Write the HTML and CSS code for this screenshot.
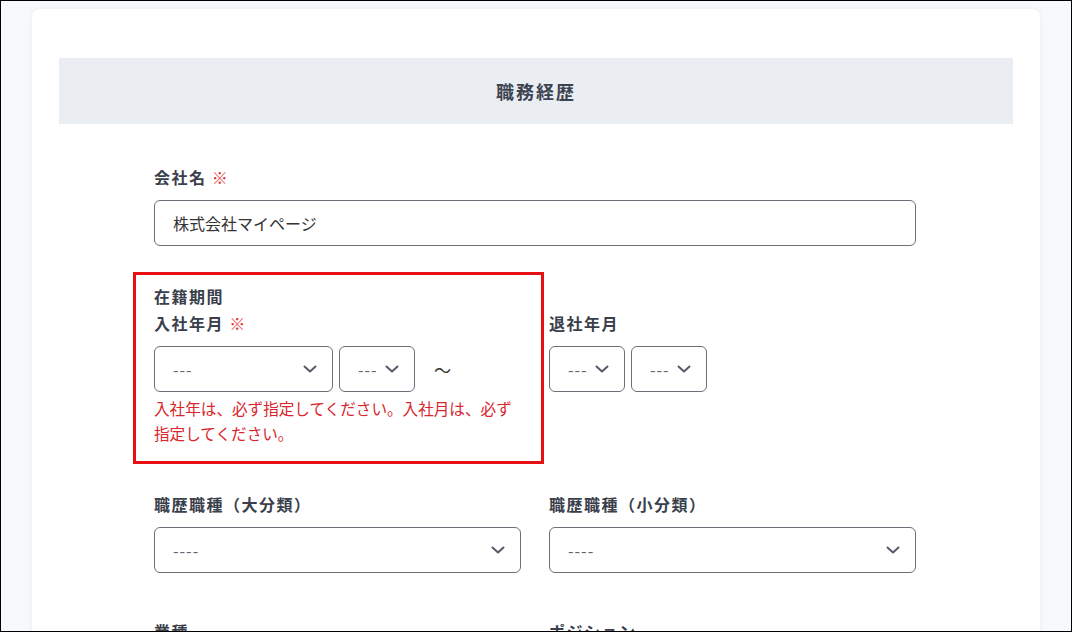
FILE: index.html
```html
<!DOCTYPE html>
<html lang="ja">
<head>
    <meta charset="UTF-8">
    <meta name="viewport" content="width=device-width, initial-scale=1.0">
    <title>職務経歴</title>
    <link rel="stylesheet" href="styles.css">
</head>
<body>
    <div class="frame">
        <div class="card">
            <h2 class="section-title">職務経歴</h2>

            <div class="form">
                <div class="field">
                    <label class="label">会社名 <span class="required">※</span></label>
                    <div class="input">株式会社マイページ</div>
                </div>

                <div class="period">
                    <div class="highlight"></div>
                    <div class="label">在籍期間</div>
                    <div class="row">
                        <div class="col">
                            <label class="label">入社年月 <span class="required">※</span></label>
                            <div class="select-group">
                                <div class="select select-year"><span>---</span><svg width="14" height="8" viewBox="0 0 14 8"><path d="M1.5 1.5 7 6.5l5.5-5" fill="none" stroke="#555b66" stroke-width="2" stroke-linecap="round" stroke-linejoin="round"/></svg></div>
                                <div class="select select-month"><span>---</span><svg width="14" height="8" viewBox="0 0 14 8"><path d="M1.5 1.5 7 6.5l5.5-5" fill="none" stroke="#555b66" stroke-width="2" stroke-linecap="round" stroke-linejoin="round"/></svg></div>
                                <span class="tilde">〜</span>
                            </div>
                            <p class="error">入社年は、必ず指定してください。入社月は、必ず指定してください。</p>
                        </div>
                        <div class="col">
                            <label class="label">退社年月</label>
                            <div class="select-group">
                                <div class="select select-month"><span>---</span><svg width="14" height="8" viewBox="0 0 14 8"><path d="M1.5 1.5 7 6.5l5.5-5" fill="none" stroke="#555b66" stroke-width="2" stroke-linecap="round" stroke-linejoin="round"/></svg></div>
                                <div class="select select-month"><span>---</span><svg width="14" height="8" viewBox="0 0 14 8"><path d="M1.5 1.5 7 6.5l5.5-5" fill="none" stroke="#555b66" stroke-width="2" stroke-linecap="round" stroke-linejoin="round"/></svg></div>
                            </div>
                        </div>
                    </div>
                </div>

                <div class="row field-row">
                    <div class="col">
                        <label class="label">職歴職種（大分類）</label>
                        <div class="select select-wide"><span>----</span><svg width="14" height="8" viewBox="0 0 14 8"><path d="M1.5 1.5 7 6.5l5.5-5" fill="none" stroke="#555b66" stroke-width="2" stroke-linecap="round" stroke-linejoin="round"/></svg></div>
                    </div>
                    <div class="col">
                        <label class="label">職歴職種（小分類）</label>
                        <div class="select select-wide"><span>----</span><svg width="14" height="8" viewBox="0 0 14 8"><path d="M1.5 1.5 7 6.5l5.5-5" fill="none" stroke="#555b66" stroke-width="2" stroke-linecap="round" stroke-linejoin="round"/></svg></div>
                    </div>
                </div>

                <div class="row field-row">
                    <div class="col">
                        <label class="label">業種</label>
                    </div>
                    <div class="col">
                        <label class="label">ポジション</label>
                    </div>
                </div>
            </div>
        </div>
    </div>
</body>
</html>
```

FILE: styles.css
```css
body {
    margin: 0;
    font-family: "Noto Sans CJK JP", "Noto Sans", sans-serif;
    color: #3a404b;
}
.frame {
    width: 1072px;
    height: 632px;
    box-sizing: border-box;
    border: 1px solid #000;
    background: #f8f9fb;
    padding: 8px 31px 0 31px;
    overflow: hidden;
}
.card {
    background: #fff;
    border-radius: 8px;
    box-shadow: 0 0 6px rgba(0, 0, 0, 0.06);
    padding: 49px 27px 60px;
    min-height: 700px;
}
.section-title {
    margin: 0;
    height: 66px;
    background: #eaedf2;
    display: flex;
    align-items: center;
    justify-content: center;
    font-size: 18px;
    font-weight: 700;
    letter-spacing: 2px;
    color: #3d4451;
}
.form {
    width: 762px;
    margin-left: 95px;
    padding-top: 41px;
}
.label {
    display: block;
    font-size: 16px;
    font-weight: 700;
    line-height: 24px;
    letter-spacing: 1.5px;
    color: #3a404b;
}
.required {
    color: #e0393e;
    font-weight: 400;
}
.input {
    margin-top: 11px;
    height: 46px;
    box-sizing: border-box;
    border: 1px solid #6b7079;
    border-radius: 6px;
    padding: 0 18px;
    display: flex;
    align-items: center;
    font-size: 16px;
    color: #333;
}
.period {
    position: relative;
    margin-top: 38px;
}
.highlight {
    position: absolute;
    left: -21px;
    top: -12px;
    width: 411px;
    height: 192px;
    box-sizing: border-box;
    border: 3px solid #e50f14;
    pointer-events: none;
}
.row {
    display: grid;
    grid-template-columns: 367px 367px;
    column-gap: 28px;
}
.period .row {
    margin-top: 3px;
}
.select-group {
    margin-top: 11px;
    display: flex;
    align-items: center;
    gap: 6px;
}
.select {
    height: 46px;
    box-sizing: border-box;
    border: 1px solid #6b7079;
    border-radius: 6px;
    display: flex;
    align-items: center;
    justify-content: space-between;
    font-size: 16px;
    color: #5f646d;
    letter-spacing: 1px;
}
.select svg {
    flex: none;
}
.select-year {
    width: 179px;
    padding: 0 15px 0 18px;
}
.select-month {
    width: 76px;
    padding: 0 15px 0 18px;
}
.select-month span {
    margin-right: 4px;
}
.select-wide {
    margin-top: 11px;
    padding: 0 15px 0 18px;
}
.tilde {
    margin-left: 13px;
    font-size: 17px;
    color: #333;
}
.error {
    margin: 4px 0 0;
    font-size: 15.6px;
    line-height: 25px;
    color: #d9262c;
}
.field-row {
    margin-top: 46px;
}
```
